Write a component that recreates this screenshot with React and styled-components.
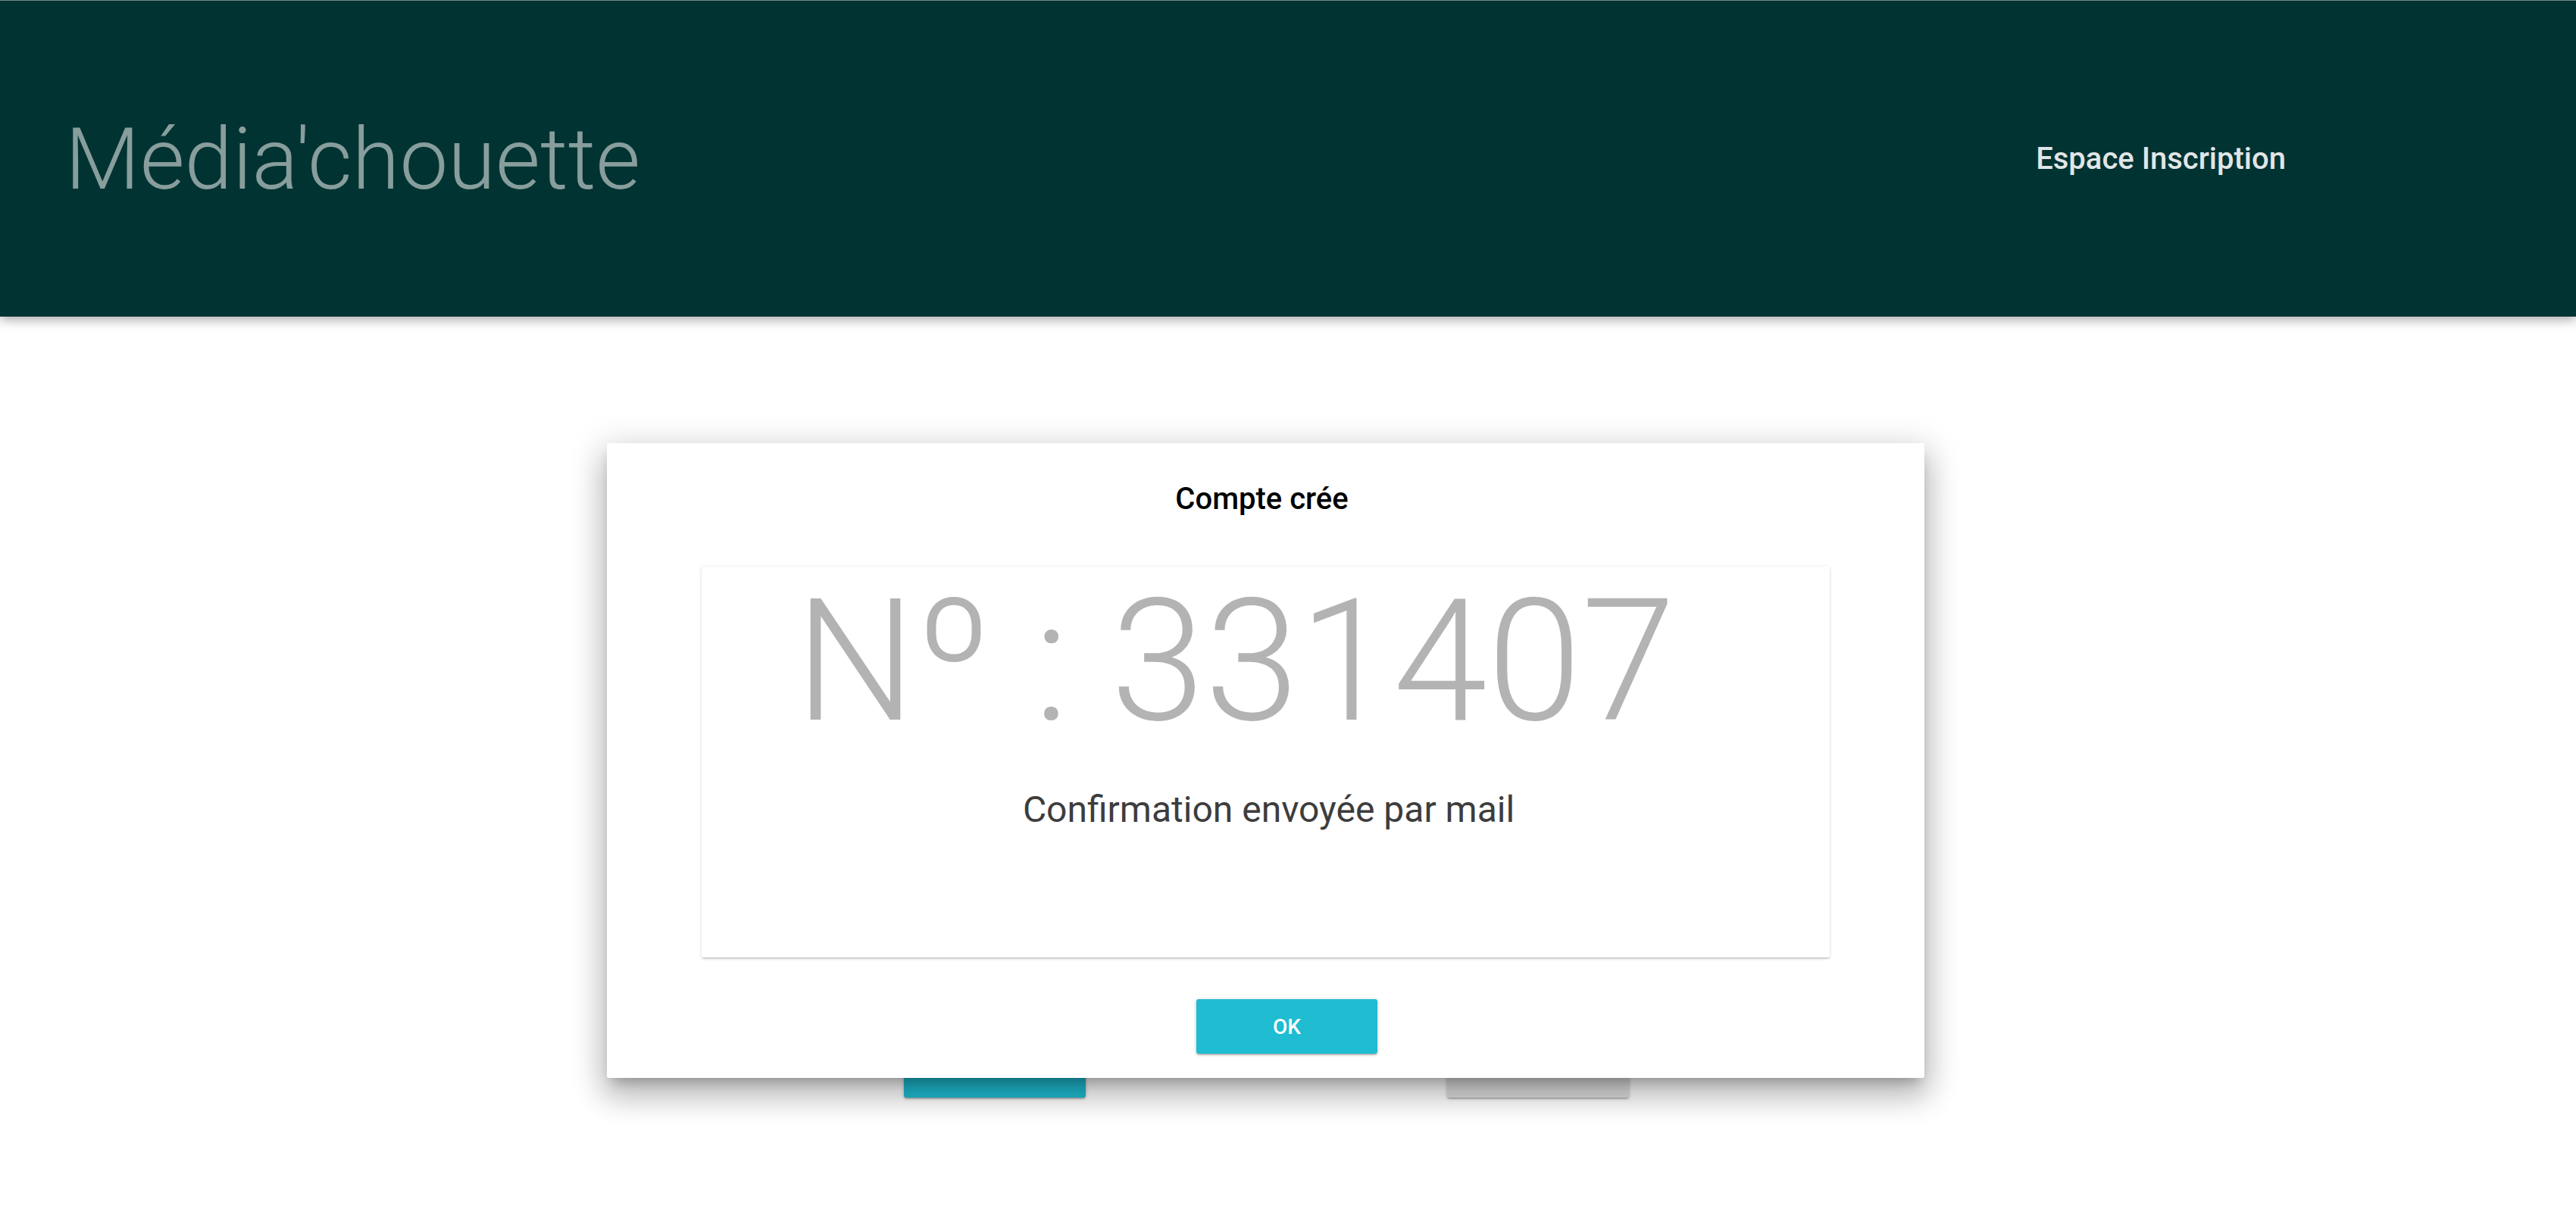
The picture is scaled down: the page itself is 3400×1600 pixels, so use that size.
import React from "react";
import styled, { createGlobalStyle } from "styled-components";

const GlobalStyle = createGlobalStyle`
  body {
    margin: 0;
    background: #ffffff;
    font-family: Roboto, "Liberation Sans", sans-serif;
  }
`;

const Page = styled.div`
  position: relative;
  min-height: 1600px;
`;

const Header = styled.header`
  height: 418px;
  box-sizing: border-box;
  background: #013333;
  border-top: 1px solid #6f8886;
  box-shadow: 0 4px 14px rgba(0, 0, 0, 0.35);
  display: flex;
  align-items: center;
  justify-content: space-between;
  padding: 0 383px 0 86px;
`;

const Brand = styled.h1`
  margin: 0;
  font-family: Roboto, sans-serif;
  font-weight: 300;
  font-size: 114px;
  color: #889e9c;
`;

const NavLink = styled.a`
  font-family: Roboto, sans-serif;
  font-weight: 500;
  font-size: 40px;
  color: #e0e6e6;
  text-decoration: none;
`;

const Form = styled.main`
  padding-top: 959px;
`;

const Actions = styled.div`
  display: flex;
  justify-content: center;
  gap: 477px;
  padding-right: 58px;
`;

const Button = styled.button`
  width: ${(p) => p.$w || 240}px;
  height: 72px;
  border: none;
  border-radius: 3px;
  background: ${(p) => p.$bg};
  color: #fff;
  font-family: Roboto, sans-serif;
  font-weight: 500;
  font-size: 28px;
  text-transform: uppercase;
  box-shadow: 0 2px 2px 0 rgba(0, 0, 0, 0.14), 0 3px 1px -2px rgba(0, 0, 0, 0.12),
    0 1px 5px 0 rgba(0, 0, 0, 0.2);
`;

const Modal = styled.div`
  position: absolute;
  left: 801px;
  top: 585px;
  width: 1739px;
  box-sizing: border-box;
  background: #fff;
  border-radius: 3px;
  padding: 50px 125px 32px;
  display: flex;
  flex-direction: column;
  align-items: center;
  box-shadow: 0 24px 38px 3px rgba(0, 0, 0, 0.18), 0 9px 46px 8px rgba(0, 0, 0, 0.14),
    0 11px 15px -7px rgba(0, 0, 0, 0.24);
`;

const Title = styled.h4`
  margin: 0 0 66px;
  padding-right: 10px;
  font-family: Roboto, sans-serif;
  font-weight: 500;
  font-size: 40px;
  color: #000;
`;

const Card = styled.div`
  align-self: stretch;
  height: 516px;
  box-sizing: border-box;
  padding-top: 14px;
  border-radius: 2px;
  display: flex;
  flex-direction: column;
  align-items: center;
  box-shadow: 0 2px 2px 0 rgba(0, 0, 0, 0.1), 0 3px 1px -2px rgba(0, 0, 0, 0.08),
    0 1px 5px 0 rgba(0, 0, 0, 0.12);
`;

const Number = styled.div`
  font-family: Roboto, sans-serif;
  font-weight: 300;
  font-size: 224px;
  line-height: 1;
  color: #b3b3b3;
  padding-right: 80px;
`;

const Note = styled.p`
  margin: 54px 0 0;
  padding-left: 8px;
  font-family: Roboto, sans-serif;
  font-weight: 400;
  font-size: 48px;
  color: #3d3d3d;
`;

const Footer = styled.div`
  margin-top: 55px;
  padding-left: 56px;
  display: flex;
  justify-content: center;
`;

export default function App() {
  return (
    <Page>
      <GlobalStyle />
      <Header>
        <Brand>Média'chouette</Brand>
        <NavLink href="#">Espace Inscription</NavLink>
      </Header>
      <Form>
        <Actions>
          <Button $bg="#1fbcd2">Valider</Button>
          <Button $bg="#dfdfdf">Annuler</Button>
        </Actions>
      </Form>
      <Modal>
        <Title>Compte crée</Title>
        <Card>
          <Number>Nº : 331407</Number>
          <Note>Confirmation envoyée par mail</Note>
        </Card>
        <Footer>
          <Button $bg="#1fbcd2" $w={239}>OK</Button>
        </Footer>
      </Modal>
    </Page>
  );
}
